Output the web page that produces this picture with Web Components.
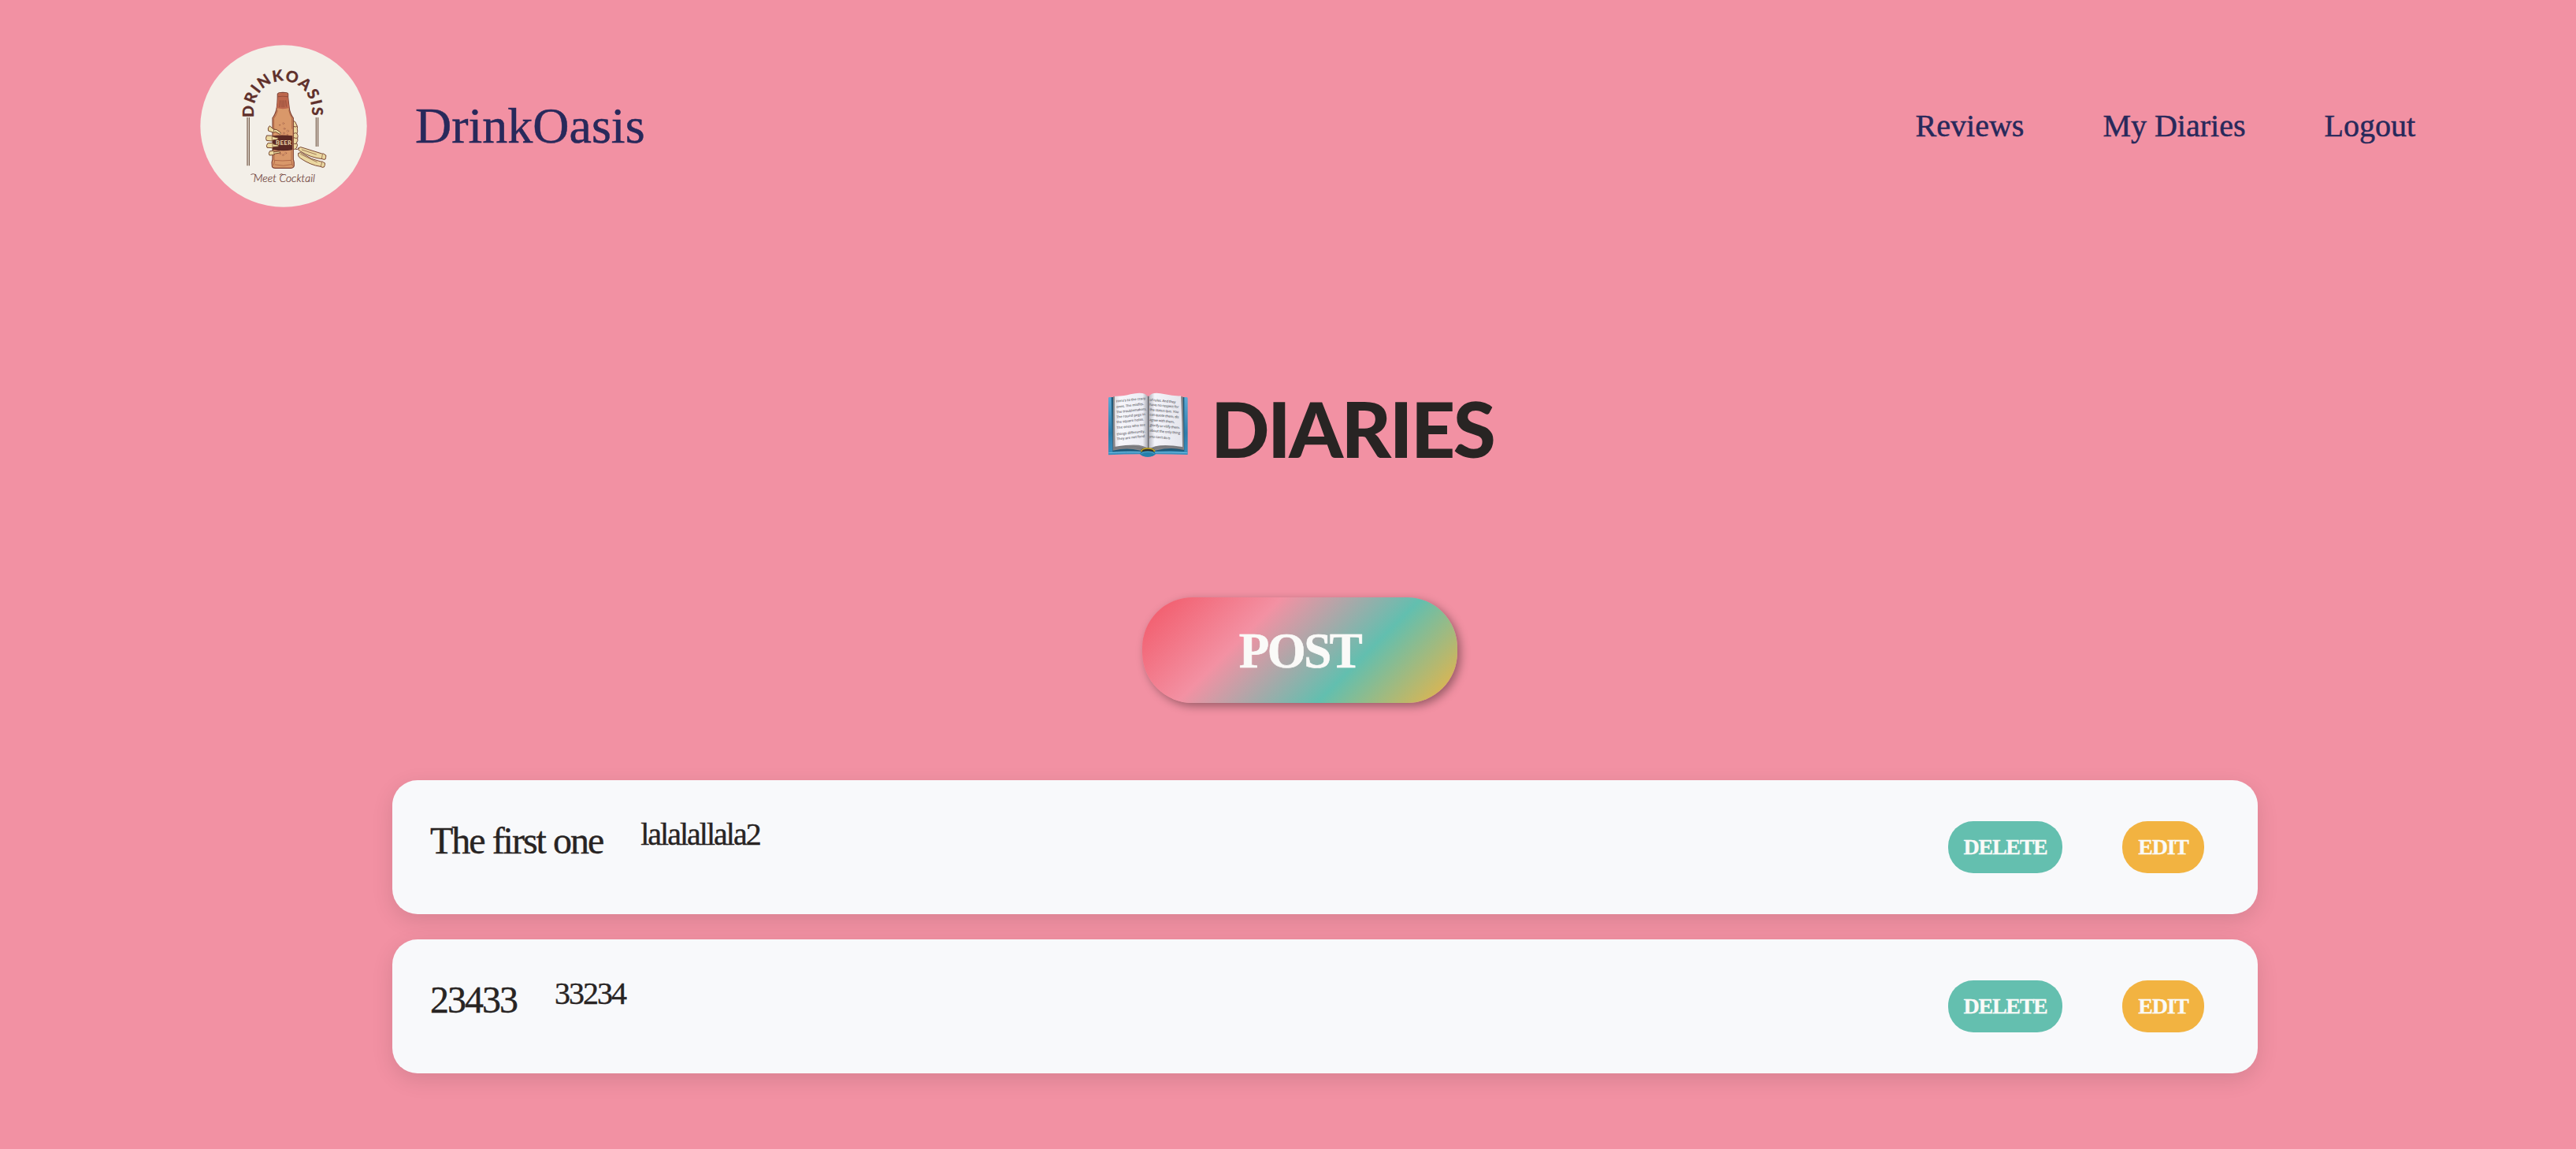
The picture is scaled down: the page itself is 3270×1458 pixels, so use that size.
<!DOCTYPE html>
<html lang="en">
<head>
<meta charset="utf-8">
<title>DrinkOasis</title>
<style>
html,body{margin:0;background:#f291a3}
body{width:3270px;height:1458px;overflow:hidden;font-family:"Liberation Serif","Times New Roman",serif;color:#282423}
</style>
</head>
<body>
<diary-page></diary-page>
<script>
const define=(name,html)=>{
  const t=document.createElement('template');
  t.innerHTML=html;
  customElements.define(name,class extends HTMLElement{
    constructor(){super();this.attachShadow({mode:'open'}).append(t.content.cloneNode(true));}
  });
};

define('oasis-logo',`
<style>:host{display:block;width:212px;height:206px}svg{display:block}</style>
<svg width="212" height="206" viewBox="42 51 636 618" fill="none" stroke-linecap="round" stroke-linejoin="round">
  <ellipse cx="360" cy="360" rx="317" ry="308.500" fill="#f3efe8"/>
  <path id="arc" d="M247 326V300A110 112 0 0 1 467 300V326"/>
  <text font-family="Lato" font-weight="900" font-size="59" fill="#60302b" stroke="#60302b" stroke-width=".800" textLength="394" lengthAdjust="spacing"><textPath href="#arc">DRINKOASIS</textPath></text>
  <g stroke="#705442" stroke-width="3.500" stroke-linecap="butt"><path d="M222 327V511M229 327V511M484 327V438M491 327V438"/></g>
  <g stroke="#7b4935" stroke-width="3">
    <path d="M395 338q12 4 14 16q6 8 3 17q3 9-1 17q6 9 2 18q3 10-4 18q7 8 1 17q-2 9-15 7z" fill="#ecd8a0"/>
    <path d="M397 361q10 5 14 0M398 388q10-5 13 0M398 404q12 4 14 2M397 426q10 5 13-1M407 449q8 2 10-5" />
    <path d="M417 444q6-8 15-2l74 23q8-1 10 3q8 1 5 10l-2 8q-5 3-12-1q-42-4-85-30q-8-2-5-11z" fill="#ead7a0"/>
    <path d="M417 463q8-6 14 1q34 24 70 31q8-1 11 3q8 0 5 11l-3 7q-7 3-13-2q-38-5-76-31q-14-9-8-20z" fill="#ead7a0"/>
    <path d="M430 450l54 18M425 467l62 30M508 468l-3 16M506 498l-4 14" stroke-width="2"/>
  </g>
  <path d="M338 237q1-5 19-5q19 0 20 5v14q3 29 6 49q6 20 14 29v158q4 10 3 24q-2 9-14 9h-57q-14 0-13-10q-2-14 2-24V329q8-9 14-29q5-22 5-63z" fill="#d9986a" stroke="#7f4134" stroke-width="3.500"/>
  <path d="M339 237q18-6 37 0v13q3 28 6 41q-25 7-49 0q6-25 6-54z" fill="#bd674d"/>
  <path d="M339 248q18-3 37 0M347 263l-2 24M354 263v24M361 263v24M368 263l2 22" stroke="#8d4939" stroke-width="2.500"/>
  <path d="M337 301q-4 17-14 30v42M380 300q4 19 12 30v40M324 458v32q30 4 66 0v-35M326 492l-4 17M390 493l4 18M328 507q31 8 63-1" stroke="#a85f41" stroke-width="2.500"/>
  <g fill="#e5af84" stroke="#9f5b43" stroke-width="1.800"><circle cx="345" cy="356" r="2"/><circle cx="359" cy="350" r="3"/><circle cx="363" cy="370" r="3"/><circle cx="376" cy="379" r="3.500"/><circle cx="361" cy="387" r="3"/><circle cx="374" cy="393" r="2.500"/><circle cx="347" cy="465" r="2.500"/><circle cx="358" cy="470" r="3"/><circle cx="368" cy="463" r="3"/></g>
  <path d="M318 397q35-5 76 0v54q-38 6-76-1z" fill="#5b2924"/>
  <text x="330" y="432" font-family="Lato" font-weight="900" font-size="23" fill="#e6cda0" textLength="60">BEER</text>
  <g fill="#ecd99f" stroke="#75452f" stroke-width="3">
    <path d="M305 361q-7 8-3 17l20 7l7-3l17 9q7-3 1-8l-13-9l-12-2l-14-12z"/>
    <path d="M295 397q-5 10 0 18l20 2l6-4l18-2v-6l-17-4l-7-4z"/>
    <path d="M299 426q-7 8-2 16l19 1l6-4l18-1v-6l-17-3l-5-4z"/>
    <path d="M307 456q-6 8-1 15l15-1l7-5l18-3q3-4-2-6l-17 2l-6-3z"/>
    <path d="M324 371l-3 13M316 399v17M318 427v15M323 457l1 11" stroke-width="2"/>
  </g>
  <text x="245" y="573" font-family="Lato" font-style="italic" font-weight="300" font-size="43" fill="#6b3a35" stroke="#6b3a35" stroke-width=".600" textLength="235" lengthAdjust="spacingAndGlyphs">Meet Cocktail</text>
  <path d="M236 544q8-5 16 0M345 545q6-7 14 0" stroke="#6b3a35" stroke-width="2.500"/>
</svg>`);

define('site-header',`
<style>
:host{display:flex;align-items:center;height:206px;padding:57px 204px 0 254px;color:#28295b;-webkit-text-stroke:.5px #28295b}
.brand{font-size:64px;line-height:74px;margin-left:61px;white-space:nowrap}
nav{display:flex;gap:100px;margin-left:auto;font-size:40px;line-height:46px}
</style>
<oasis-logo></oasis-logo>
<div class="brand">DrinkOasis</div>
<nav><slot></slot></nav>`);
customElements.get('oasis-logo');

define('open-book',`
<style>:host{display:block;width:115px;height:95px}svg{display:block}</style>
<svg width="115" height="95" viewBox="0 0 345 285">
  <defs>
    <linearGradient id="cover" x2="0" y2="1"><stop stop-color="#5ba9d6"/><stop offset=".6" stop-color="#2d7dab"/><stop offset="1" stop-color="#3b91bf"/></linearGradient>
    <linearGradient id="left"><stop stop-color="#dcdce2"/><stop offset=".15" stop-color="#f6f6fb"/><stop offset=".85" stop-color="#ededf4"/><stop offset="1" stop-color="#a7a7af"/></linearGradient>
    <linearGradient id="right"><stop stop-color="#b3b3bc"/><stop offset=".18" stop-color="#f4f4fa"/><stop offset="1" stop-color="#e5e5ec"/></linearGradient>
  </defs>
  <path d="M24 46q0-4 4-4h292q6 0 6 4v215q-60-2-126-2q-5 10-26 10t-26-10q-66 0-124 3z" fill="url(#cover)"/>
  <path d="M25 254q70-5 128-2M199 252q65-1 126 2" stroke="#72bce0" stroke-width="3" fill="none"/>
  <path d="M35 42h278v206q-50-2-112 0h-54q-60-2-107 2z" fill="#1f5878"/>
  <path d="M42 40h266l4 203q-52-13-103 1l-35 8l-35-8q-42-11-98 1z" fill="#86868a"/>
  <path d="M42 240q60-13 112 0M192 240q58-13 119 1M42 234q60-13 116 1M190 235q58-13 118 0" stroke="#626267" stroke-width="1.500" fill="none"/>
  <path d="M48 38q35 1 60-7q52-13 66 8v201q-16-27-124-10q-3-90-2-192z" fill="url(#left)"/>
  <path d="M178 39q13-21 62-8q30 7 60 6q5 95 6 194q-98-16-129 10z" fill="url(#right)"/>
  <path d="M176 38v203" stroke="#626269" stroke-width="4"/>
  <path d="M147 248q-1-12 27-13q28 1 27 13q-4 16-27 16t-27-16z" fill="#30302d"/>
  <path d="M149 249q2-12 25-12t26 12" stroke="#c6a71e" stroke-width="5" fill="none"/>
  <path d="M143 257q7-10 31-10q23 0 31 10q-9 12-31 12t-31-12z" fill="#2680ab"/>
  <path d="M149 257q9-7 25-7t25 7" stroke="#61b1d5" stroke-width="2" fill="none"/>
  <g font-family="Open Sans" font-weight="600" font-size="13" fill="#66666c">
    <g transform="rotate(-6 54 60)">
      <text x="54" y="62" textLength="112">Here's to the crazy</text><text x="52" y="83" textLength="106">ones. The misfits.</text><text x="50" y="103" textLength="116">The troublemakers.</text><text x="48" y="122" textLength="111">The round pegs in</text><text x="47" y="141" textLength="105">the square holes.</text><text x="45" y="162" textLength="110">The ones who see</text><text x="43" y="187" textLength="109">things differently.</text><text x="41" y="205" textLength="108">They are not fond</text>
    </g>
    <g transform="rotate(5 180 53)">
      <text x="181" y="56" textLength="100">of rules. And they</text><text x="182" y="74" textLength="112">have no respect for</text><text x="184" y="93" textLength="112">the status quo. You</text><text x="186" y="112" textLength="112">can quote them, dis</text><text x="187" y="132" textLength="96">agree with them,</text><text x="190" y="152" textLength="116">glorify or vilify them.</text><text x="191" y="172" textLength="117">about the only thing</text><text x="192" y="195" textLength="80">you can't do is</text>
    </g>
  </g>
</svg>`);

define('page-title',`
<style>
:host{display:flex;align-items:flex-start;margin:227px 0 0 1399px;height:95px}
h1{margin:-7px 0 0 23px;font:900 98px/120px Lato,sans-serif;white-space:nowrap;letter-spacing:-2.500px}
</style>
<open-book></open-book><h1><slot></slot></h1>`);

define('post-button',`
<style>
:host{display:block;width:400px;margin:173px 0 98px 1450px}
button{all:unset;box-sizing:border-box;display:block;width:400px;height:134px;border-radius:64px;text-align:center;font:bold 63px/136px "Liberation Serif",serif;letter-spacing:-2.500px;color:#fafaf8;-webkit-text-stroke:.6px #fafaf8;background:linear-gradient(135deg,#f25565 0%,#f391a3 33.300%,#62bfaf 66.600%,#f2b341 100%);box-shadow:4px 4px 12px rgba(0,0,0,.37)}
</style><button><slot></slot></button>`);

define('pill-button',`
<style>
:host{display:block;width:var(--width)}
button{all:unset;display:block;width:100%;height:66px;border-radius:32px;text-align:center;font:bold 28px/64px "Liberation Serif",serif;letter-spacing:-1.300px;color:#fafaf8;-webkit-text-stroke:.3px #fafaf8;background:var(--tone)}
</style><button><slot></slot></button>`);

define('diary-entry',`
<style>
:host{display:flex;box-sizing:border-box;width:2368px;height:170px;padding:52px 68px 0 48px;border-radius:32px;background:#f8f9fb;box-shadow:0 8px 28px rgba(0,0,0,.11);letter-spacing:-2px;font-variant-ligatures:none}
.title,.text{-webkit-text-stroke:.4px #282423}
.title{font-size:48px;line-height:49px;margin-right:48px}
.text{font-size:40px;line-height:34px}
.actions{display:flex;gap:76px;margin-left:auto}
.delete{--tone:#64bfaf;--width:145px}.edit{--tone:#f2b341;--width:104px}
</style>
<div class="title"><slot name="title"></slot></div>
<div class="text"><slot></slot></div>
<div class="actions"><pill-button class="delete">DELETE</pill-button><pill-button class="edit">EDIT</pill-button></div>`);

define('diary-list',`<style>:host{display:flex;flex-direction:column;gap:32px;margin-left:498px}</style><slot></slot>`);

define('diary-page',`
<style>:host{display:block}</style>
<site-header><span>Reviews</span><span>My Diaries</span><span>Logout</span></site-header>
<main>
<page-title>DIARIES</page-title>
<post-button>POST</post-button>
<diary-list>
<diary-entry><span slot="title">The first one</span>lalalallala2</diary-entry>
<diary-entry><span slot="title">23433</span>33234</diary-entry>
</diary-list>
</main>`);
</script>
</body>
</html>
